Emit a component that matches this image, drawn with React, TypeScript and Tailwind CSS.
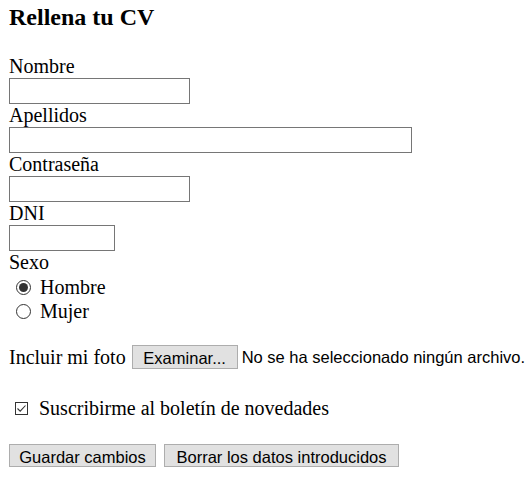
const serif = "font-['Liberation_Serif','Times_New_Roman',serif]";
const sans = "font-['Liberation_Sans',Arial,sans-serif]";

function Field({ label, width }: { label: string; width: string }) {
  return (
    <div className="flex flex-col items-start">
      <label className="h-[23px] leading-[23px]">{label}</label>
      <input
        type="text"
        className={`h-[26px] ${width} border border-[#767676] bg-white px-1 text-sm outline-none`}
      />
    </div>
  );
}

function Radio({ checked, label }: { checked?: boolean; label: string }) {
  return (
    <label className="flex h-[24px] items-center">
      <span className="ml-[7px] flex h-[15px] w-[15px] items-center justify-center rounded-full border border-[#333333] bg-white">
        {checked && <span className="h-[9px] w-[9px] rounded-full bg-[#333333]" />}
      </span>
      <span className="ml-[9px] leading-[23px]">{label}</span>
    </label>
  );
}

export default function App() {
  return (
    <form className={`min-h-[498px] bg-white pl-[9px] text-[20px] text-black ${serif}`}>
      <h2 className="mt-[4px] mb-[24px] text-[24px] font-bold leading-[27px]">Rellena tu CV</h2>

      <Field label="Nombre" width="w-[181px]" />
      <Field label="Apellidos" width="w-[403px]" />
      <Field label="Contraseña" width="w-[181px]" />
      <Field label="DNI" width="w-[106px]" />

      <div className="h-[24px] leading-[23px]">Sexo</div>
      <Radio checked label="Hombre" />
      <Radio label="Mujer" />

      <div className="mt-[22px] flex h-[24px] items-center">
        <span className="leading-[23px]">Incluir mi foto</span>
        <button
          type="button"
          className={`ml-[6px] h-[24px] w-[106px] border border-[#adadad] bg-[#e1e1e1] text-[16.5px] ${sans}`}
        >
          Examinar...
        </button>
        <span className={`ml-[4px] text-[16.5px] ${sans}`}>No se ha seleccionado ningún archivo.</span>
      </div>

      <label className="mt-[27px] flex h-[24px] items-center">
        <span className="ml-[6px] flex h-[13px] w-[13px] items-center justify-center border border-[#333333] bg-white">
          <svg viewBox="0 0 11 11" className="h-[11px] w-[11px]">
            <path d="M1.5 5.5 L4.2 8.2 L9.5 2.5" fill="none" stroke="#333333" strokeWidth="1.1" />
          </svg>
        </span>
        <span className="ml-[11px] leading-[23px]">Suscribirme al boletín de novedades</span>
      </label>

      <div className={`mt-[24px] flex gap-[8px] text-[16.5px] ${sans}`}>
        <button type="button" className="h-[23px] w-[147px] border border-[#adadad] bg-[#e1e1e1]">
          Guardar cambios
        </button>
        <button type="button" className="h-[23px] w-[235px] border border-[#adadad] bg-[#e1e1e1]">
          Borrar los datos introducidos
        </button>
      </div>
    </form>
  );
}
